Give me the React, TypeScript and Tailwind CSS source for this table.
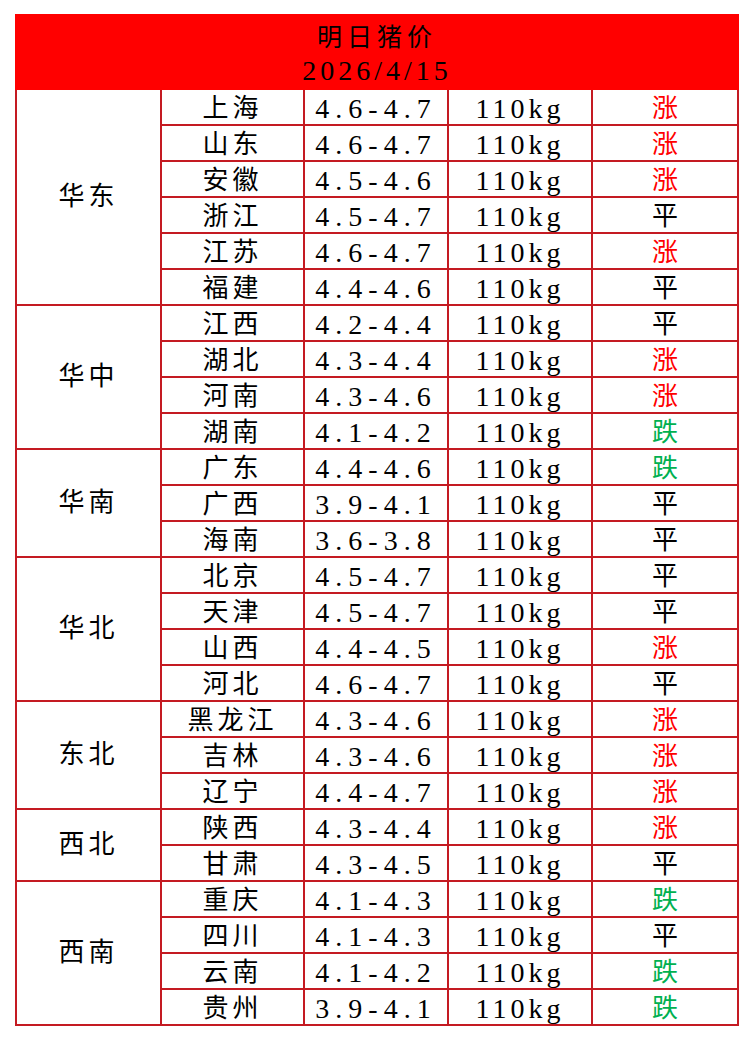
import React from 'react';

type Row = { city: string; range: string; trend: '涨' | '平' | '跌' };

const groups: { region: string; rows: Row[] }[] = [
  {
    region: '华东',
    rows: [
      { city: '上海', range: '4.6-4.7', trend: '涨' },
      { city: '山东', range: '4.6-4.7', trend: '涨' },
      { city: '安徽', range: '4.5-4.6', trend: '涨' },
      { city: '浙江', range: '4.5-4.7', trend: '平' },
      { city: '江苏', range: '4.6-4.7', trend: '涨' },
      { city: '福建', range: '4.4-4.6', trend: '平' },
    ],
  },
  {
    region: '华中',
    rows: [
      { city: '江西', range: '4.2-4.4', trend: '平' },
      { city: '湖北', range: '4.3-4.4', trend: '涨' },
      { city: '河南', range: '4.3-4.6', trend: '涨' },
      { city: '湖南', range: '4.1-4.2', trend: '跌' },
    ],
  },
  {
    region: '华南',
    rows: [
      { city: '广东', range: '4.4-4.6', trend: '跌' },
      { city: '广西', range: '3.9-4.1', trend: '平' },
      { city: '海南', range: '3.6-3.8', trend: '平' },
    ],
  },
  {
    region: '华北',
    rows: [
      { city: '北京', range: '4.5-4.7', trend: '平' },
      { city: '天津', range: '4.5-4.7', trend: '平' },
      { city: '山西', range: '4.4-4.5', trend: '涨' },
      { city: '河北', range: '4.6-4.7', trend: '平' },
    ],
  },
  {
    region: '东北',
    rows: [
      { city: '黑龙江', range: '4.3-4.6', trend: '涨' },
      { city: '吉林', range: '4.3-4.6', trend: '涨' },
      { city: '辽宁', range: '4.4-4.7', trend: '涨' },
    ],
  },
  {
    region: '西北',
    rows: [
      { city: '陕西', range: '4.3-4.4', trend: '涨' },
      { city: '甘肃', range: '4.3-4.5', trend: '平' },
    ],
  },
  {
    region: '西南',
    rows: [
      { city: '重庆', range: '4.1-4.3', trend: '跌' },
      { city: '四川', range: '4.1-4.3', trend: '平' },
      { city: '云南', range: '4.1-4.2', trend: '跌' },
      { city: '贵州', range: '3.9-4.1', trend: '跌' },
    ],
  },
];

const trendColor = {
  涨: 'text-[#ff0000]',
  平: 'text-black',
  跌: 'text-[#00b050]',
};

const cell = 'border-2 border-[#c41a22] p-0 text-center align-middle leading-none';

export default function App() {
  return (
    <div
      className="min-h-[1040px] w-[752px] bg-white pl-[15px] pt-[14px]"
      style={{ fontFamily: '"Liberation Serif", "Noto Sans CJK SC", serif' }}
    >
      <table className="w-[722px] table-fixed border-collapse text-[26px] text-black">
        <colgroup>
          <col className="w-[145px]" />
          <col className="w-[143px]" />
          <col className="w-[144px]" />
          <col className="w-[144px]" />
          <col className="w-[146px]" />
        </colgroup>
        <tbody>
          <tr className="h-[74px]">
            <td colSpan={5} className="border-2 border-[#ff0000] bg-[#ff0000] p-0 text-center">
              <div className="pt-[4px] text-[25px] leading-[34px] tracking-[5px]">明日猪价</div>
              <div className="text-[28px] leading-[32px] tracking-[4px]">2026/4/15</div>
            </td>
          </tr>
          {groups.map((g) =>
            g.rows.map((r, i) => (
              <tr key={g.region + r.city} className="h-[36px]">
                {i === 0 && (
                  <td rowSpan={g.rows.length} className={`${cell} tracking-[4px]`}>
                    {g.region}
                  </td>
                )}
                <td className={`${cell} pt-[3px] tracking-[4px]`}>{r.city}</td>
                <td className={`${cell} pt-[4px] text-[28px] tracking-[6px]`}>{r.range}</td>
                <td className={`${cell} pt-[4px] text-[28px] tracking-[4px]`}>110kg</td>
                <td className={`${cell} pt-[3px] ${trendColor[r.trend]}`}>{r.trend}</td>
              </tr>
            ))
          )}
        </tbody>
      </table>
    </div>
  );
}
